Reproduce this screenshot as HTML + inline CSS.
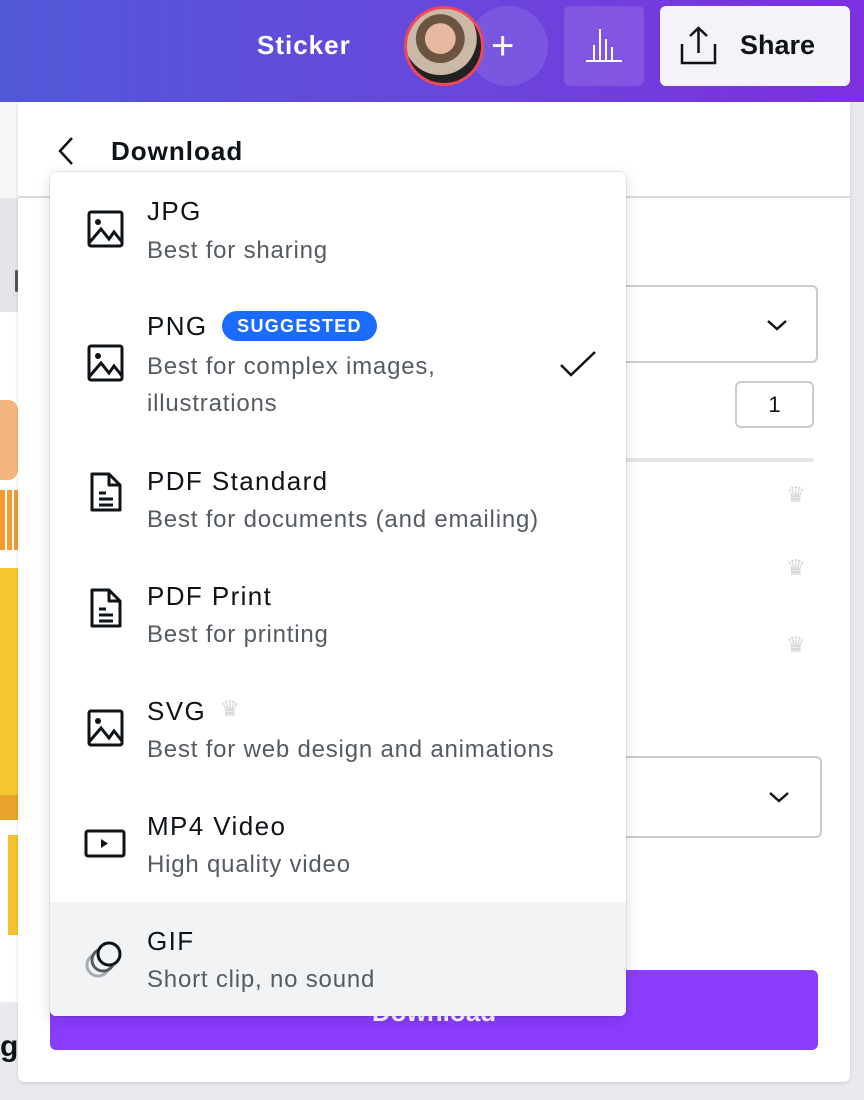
<!DOCTYPE html>
<html><head><meta charset="utf-8">
<style>
*{margin:0;padding:0;box-sizing:border-box}
body{width:864px;height:1100px;overflow:hidden;background:#e9eaee;font-family:"Liberation Sans",sans-serif;position:relative}
.hdr{position:absolute;left:0;top:0;width:864px;height:102px;background:linear-gradient(90deg,#5158d8 0%,#6a46dc 55%,#7e2fe0 100%)}
.abs{position:absolute}
.panel{position:absolute;left:18px;top:102px;width:832px;height:980px;background:#fff;border-radius:0 0 6px 6px;box-shadow:0 1px 3px rgba(0,0,0,.15)}
.menu{position:absolute;left:50px;top:172px;width:576px;height:844px;background:#fff;border-radius:6px;box-shadow:0 0 0 1px rgba(0,0,0,.06),0 4px 14px rgba(0,0,0,.15);overflow:hidden}
.t{position:absolute;left:97px;font-size:26px;letter-spacing:1.4px;color:#0e1318;white-space:nowrap}
.s{position:absolute;left:97px;font-size:24px;letter-spacing:0.8px;color:#555b63;white-space:nowrap}
.ic{position:absolute;left:36px}
</style></head><body>
<div class="hdr"></div>
<div class="abs" style="left:257px;top:30px;color:#fff;font-size:26px;font-weight:bold;letter-spacing:1px">Sticker</div>
<div class="abs" style="left:468px;top:6px;width:80px;height:80px;border-radius:50%;background:rgba(255,255,255,.1)"></div>
<div class="abs" style="left:491px;top:28px;color:#fff;font-size:40px;line-height:36px">+</div>
<div class="abs" style="left:404px;top:6px;width:80px;height:80px;border-radius:50%;border:3px solid #f0475a;background:radial-gradient(circle at 45% 40%,#e8b9a0 0 25%,#6b5440 26% 40%,#c9b9a6 41% 60%,#222 61%)"></div>
<div class="abs" style="left:564px;top:6px;width:80px;height:80px;border-radius:6px;background:rgba(255,255,255,.12)"></div>
<svg class="abs" style="left:584px;top:27px" width="40" height="36" viewBox="0 0 40 36"><path d="M2 34H38M10 34V18M16 34V2M22 34V12M28 34V20" stroke="#fff" stroke-width="2" fill="none"/></svg>
<div class="abs" style="left:660px;top:6px;width:190px;height:80px;border-radius:6px;background:#f5f3fa"></div>
<svg class="abs" style="left:680px;top:26px" width="38" height="40" viewBox="0 0 38 40"><path d="M2 18V37H35V18M18.5 2V27M10 10L18.5 2L27 10" stroke="#0e1318" stroke-width="2.5" fill="none"/></svg>
<div class="abs" style="left:740px;top:30px;font-size:27px;font-weight:bold;color:#0e1318">Share</div>

<div class="abs" style="left:0;top:102px;width:18px;height:96px;background:#f7f7f8"></div>
<div class="abs" style="left:0;top:198px;width:18px;height:114px;background:#e4e5e9"></div>
<div class="abs" style="left:15px;top:270px;width:3px;height:22px;background:#555;border-radius:2px"></div>
<div class="abs" style="left:0;top:312px;width:18px;height:690px;background:#fff"></div>
<div class="abs" style="left:0;top:400px;width:18px;height:80px;background:#f5b57e;border-radius:0 10px 10px 0"></div>
<div class="abs" style="left:0;top:490px;width:18px;height:60px;background:repeating-linear-gradient(90deg,#f39a30 0 5px,#fff 5px 7px)"></div>
<div class="abs" style="left:0;top:568px;width:18px;height:250px;background:#f5c732"></div>
<div class="abs" style="left:0;top:795px;width:18px;height:25px;background:#e8a42a"></div>
<div class="abs" style="left:8px;top:835px;width:10px;height:100px;background:#f3c330"></div>
<div class="abs" style="left:0;top:1002px;width:18px;height:98px;background:#e9eaee"></div>
<div class="abs" style="left:0;top:1030px;font-size:30px;font-weight:bold;color:#0e1318">ge</div>

<div class="panel"></div>
<svg class="abs" style="left:55px;top:136px" width="20" height="30" viewBox="0 0 20 30"><path d="M17 2L5 15L17 28" stroke="#0e1318" stroke-width="2.5" fill="none"/></svg>
<div class="abs" style="left:111px;top:136px;font-size:26px;font-weight:bold;letter-spacing:1px;color:#0e1318">Download</div>
<div class="abs" style="left:18px;top:196px;width:832px;height:2px;background:#d7d9dd"></div>
<div class="abs" style="left:600px;top:285px;width:218px;height:78px;border:2px solid #c8ccd1;border-radius:6px"></div>
<svg class="abs" style="left:766px;top:318px" width="22" height="14" viewBox="0 0 22 14"><path d="M2 3L11 11L20 3" stroke="#0e1318" stroke-width="2.5" fill="none"/></svg>
<div class="abs" style="left:735px;top:381px;width:79px;height:47px;border:2px solid #c8ccd1;border-radius:6px;text-align:center;font-size:22px;line-height:43px;color:#0e1318">1</div>
<div class="abs" style="left:600px;top:458px;width:214px;height:4px;background:#e4e6ea;border-radius:2px"></div>
<div class="abs" style="left:786px;top:482px;color:#d3d6da;font-size:22px">♛</div>
<div class="abs" style="left:786px;top:555px;color:#d3d6da;font-size:22px">♛</div>
<div class="abs" style="left:786px;top:632px;color:#d3d6da;font-size:22px">♛</div>
<div class="abs" style="left:600px;top:756px;width:222px;height:82px;border:2px solid #c8ccd1;border-radius:6px"></div>
<svg class="abs" style="left:768px;top:790px" width="22" height="14" viewBox="0 0 22 14"><path d="M2 3L11 11L20 3" stroke="#0e1318" stroke-width="2.5" fill="none"/></svg>
<div class="abs" style="left:50px;top:970px;width:768px;height:80px;background:#8b3dff;border-radius:6px;color:#fff;font-size:26px;font-weight:bold;text-align:center;line-height:84px">Download</div>

<div class="menu">
  <svg class="ic" style="top:38px" width="38" height="38" viewBox="0 0 38 38"><rect x="3" y="2" width="33" height="34" rx="2" stroke="#0e1318" stroke-width="3" fill="none"/><circle cx="12" cy="12" r="3" fill="#0e1318"/><path d="M3 33L15 19L23 29L28 22L36 32" stroke="#0e1318" stroke-width="3" fill="none"/></svg>
  <div class="t" style="top:24px">JPG</div>
  <div class="s" style="top:65px">Best for sharing</div>

  <svg class="ic" style="top:172px" width="38" height="38" viewBox="0 0 38 38"><rect x="3" y="2" width="33" height="34" rx="2" stroke="#0e1318" stroke-width="3" fill="none"/><circle cx="12" cy="12" r="3" fill="#0e1318"/><path d="M3 33L15 19L23 29L28 22L36 32" stroke="#0e1318" stroke-width="3" fill="none"/></svg>
  <div class="t" style="top:139px">PNG</div>
  <div class="abs" style="left:172px;top:139px;width:155px;height:30px;border-radius:15px;background:#1a6cff;color:#fff;font-weight:bold;font-size:18px;letter-spacing:1.3px;text-align:center;line-height:30px">SUGGESTED</div>
  <div class="s" style="top:181px">Best for complex images,</div>
  <div class="s" style="top:218px">illustrations</div>
  <svg class="abs" style="left:509px;top:178px" width="38" height="28" viewBox="0 0 38 28"><path d="M2 15L12 25L36 2" stroke="#0e1318" stroke-width="2.5" fill="none"/></svg>

  <svg class="ic" style="top:300px;left:40px" width="32" height="40" viewBox="0 0 32 40"><path d="M2 2H19L30 13V38H2Z M19 2V13H30 M9 21H16M9 27H23M9 33H23" stroke="#0e1318" stroke-width="3" fill="none" stroke-linejoin="round"/></svg>
  <div class="t" style="top:294px">PDF Standard</div>
  <div class="s" style="top:334px">Best for documents (and emailing)</div>

  <svg class="ic" style="top:416px;left:40px" width="32" height="40" viewBox="0 0 32 40"><path d="M2 2H19L30 13V38H2Z M19 2V13H30 M9 21H16M9 27H23M9 33H23" stroke="#0e1318" stroke-width="3" fill="none" stroke-linejoin="round"/></svg>
  <div class="t" style="top:409px">PDF Print</div>
  <div class="s" style="top:449px">Best for printing</div>

  <svg class="ic" style="top:537px" width="38" height="38" viewBox="0 0 38 38"><rect x="3" y="2" width="33" height="34" rx="2" stroke="#0e1318" stroke-width="3" fill="none"/><circle cx="12" cy="12" r="3" fill="#0e1318"/><path d="M3 33L15 19L23 29L28 22L36 32" stroke="#0e1318" stroke-width="3" fill="none"/></svg>
  <div class="t" style="top:524px">SVG</div>
  <div class="abs" style="left:170px;top:524px;color:#d3d6da;font-size:22px">♛</div>
  <div class="s" style="top:564px">Best for web design and animations</div>

  <svg class="ic" style="top:657px;left:34px" width="44" height="30" viewBox="0 0 44 30"><rect x="2" y="2" width="38" height="25" rx="2" stroke="#0e1318" stroke-width="3" fill="none"/><path d="M17 10V19L24 14.5Z" fill="#0e1318"/></svg>
  <div class="t" style="top:639px">MP4 Video</div>
  <div class="s" style="top:679px">High quality video</div>

  <div class="abs" style="left:0;top:730px;width:576px;height:114px;background:#f2f3f5"></div>
  <svg class="ic" style="top:764px;left:34px" width="44" height="46" viewBox="0 0 44 46"><circle cx="14" cy="29" r="11" stroke="#a8acb2" stroke-width="3" fill="none"/><circle cx="19" cy="24" r="11" stroke="#555b63" stroke-width="3" fill="#f2f3f5"/><circle cx="25" cy="18" r="11" stroke="#0e1318" stroke-width="3" fill="#f2f3f5"/></svg>
  <div class="t" style="top:754px">GIF</div>
  <div class="s" style="top:794px">Short clip, no sound</div>
</div>
</body></html>
